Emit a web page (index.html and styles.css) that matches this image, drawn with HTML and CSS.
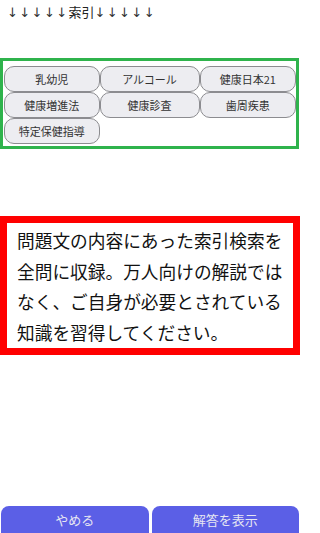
FILE: index.html
```html
<!DOCTYPE html>
<html lang="ja">
<head>
<meta charset="utf-8">
<link rel="stylesheet" href="styles.css">
</head>
<body>
<div class="page">
  <div class="title"><span class="arrows">↓↓↓↓↓</span>索引<span class="arrows">↓↓↓↓↓</span></div>
  <div class="tags">
    <div class="grid">
      <div class="tag">乳幼児</div>
      <div class="tag">アルコール</div>
      <div class="tag">健康日本21</div>
      <div class="tag">健康増進法</div>
      <div class="tag">健康診査</div>
      <div class="tag">歯周疾患</div>
      <div class="tag">特定保健指導</div>
    </div>
  </div>
  <div class="notice">問題文の内容にあった索引検索を<br>全問に収録。万人向けの解説では<br>なく、ご自身が必要とされている<br>知識を習得してください。</div>
  <div class="actions">
    <div class="btn">やめる</div>
    <div class="btn">解答を表示</div>
  </div>
</div>
</body>
</html>
```

FILE: styles.css
```css
html, body {
  margin: 0;
  padding: 0;
  background: #ffffff;
}
body {
  font-family: "Noto Sans CJK JP", "Noto Sans", sans-serif;
}
.page {
  display: flex;
  flex-direction: column;
  width: 300px;
  height: 533px;
  overflow: hidden;
}
.title {
  padding: 3px 0 0 7px;
  font-size: 13px;
  line-height: 17px;
  color: #222;
}
.arrows {
  font-family: "DejaVu Sans", sans-serif;
  font-size: 13px;
  letter-spacing: 1.4px;
  color: #333;
}
.tags {
  margin-top: 37px;
  width: 299px;
  box-sizing: border-box;
  border: 3px solid #2fb34c;
  padding: 5px 1px 2px 1px;
}
.grid {
  display: grid;
  grid-template-columns: 95.5px 100px 96.5px;
  grid-auto-rows: 26px;
}
.tag {
  display: flex;
  align-items: center;
  justify-content: center;
  background: #ededf1;
  border: 1px solid #8c8c90;
  border-radius: 10px;
  font-size: 11px;
  color: #333;
}
.notice {
  margin-top: 67px;
  border: 7px solid #ff0000;
  padding: 2px 4px 1px 10px;
  font-size: 17.7px;
  line-height: 30.5px;
  color: #111;
  white-space: nowrap;
}
.actions {
  margin-top: auto;
  display: flex;
  gap: 3px;
  padding: 0 1px;
  height: 27px;
}
.btn {
  flex: 1;
  display: flex;
  align-items: center;
  justify-content: center;
  background: #5b5fe6;
  border-radius: 8px 8px 0 0;
  color: #e6e6f2;
  font-size: 13px;
}
```
